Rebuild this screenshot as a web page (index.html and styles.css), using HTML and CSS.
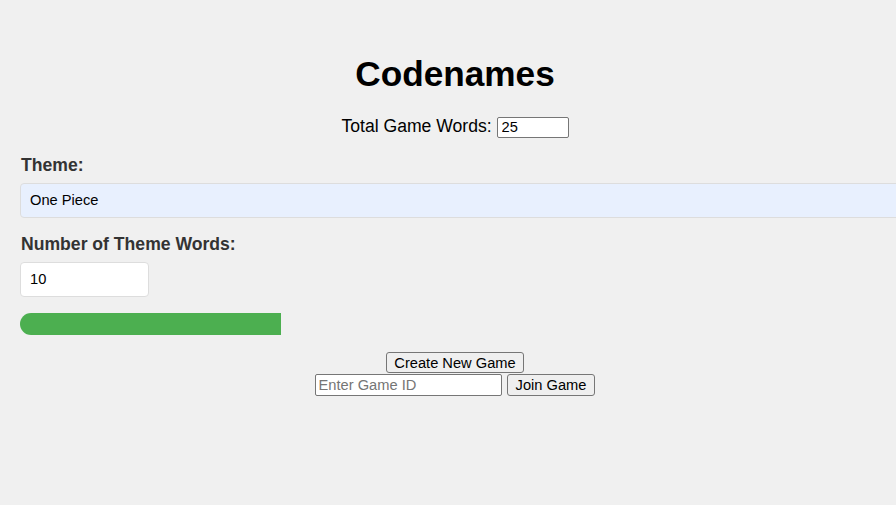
FILE: index.html
```html
<!DOCTYPE html>
<html lang="en">
<head>
<meta charset="utf-8">
<title>Codenames</title>
<link rel="stylesheet" href="styles.css">
</head>
<body>
<main class="app">
  <h1 class="title">Codenames</h1>
  <div class="total-row">
    <label for="total">Total Game Words:</label> <input id="total" class="total-input" type="text" value="25">
  </div>
  <section class="theme-section">
    <label class="field-label" for="theme">Theme:</label>
    <input id="theme" class="theme-input" type="text" value="One Piece">
    <label class="field-label" for="count">Number of Theme Words:</label>
    <input id="count" class="count-input" type="text" value="10">
    <div class="progress"><div class="progress-fill" style="width: 30%"></div></div>
  </section>
  <div class="action-row create-row">
    <button class="btn" type="button">Create New Game</button>
  </div>
  <div class="action-row join-row">
    <input class="game-id-input" type="text" placeholder="Enter Game ID">
    <button class="btn join-btn" type="button">Join Game</button>
  </div>
</main>
</body>
</html>
```
FILE: styles.css
```css
html, body {
  overflow-x: hidden;
}

body {
  margin: 0;
  background: #f0f0f0;
  font-family: "Liberation Sans", Arial, sans-serif;
  font-size: 17.6px;
  color: #000;
}

.app {
  padding: 54px 6px 0 20px;
  text-align: center;
}

.title {
  margin: 0;
  font-size: 35.2px;
  line-height: 40px;
  font-weight: bold;
}

.total-row {
  margin-top: 22px;
}

.total-input {
  width: 72px;
  height: 21px;
  box-sizing: border-box;
  padding: 1px 4px;
  border: 1px solid #767676;
  border-radius: 2px;
  background: #fff;
  font-family: "Liberation Sans", Arial, sans-serif;
  font-size: 14.67px;
  color: #000;
}

.theme-section {
  text-align: left;
  padding-top: 1px;
}

.field-label {
  display: block;
  margin: 16.5px 0 6.6px;
  padding-left: 1px;
  font-weight: bold;
  color: #333;
}

.theme-input,
.count-input {
  display: block;
  height: 35px;
  box-sizing: border-box;
  padding: 0 9px;
  border: 1px solid #ddd;
  border-radius: 4px;
  font-family: "Liberation Sans", Arial, sans-serif;
  font-size: 14.67px;
  color: #000;
}

.theme-input {
  width: calc(100% + 40px);
  background: #e8f0fe;
}

.count-input {
  width: 129px;
  background: #fff;
}

.progress {
  margin-top: 16.5px;
  height: 22px;
  border-radius: 11px;
  overflow: hidden;
}

.progress-fill {
  height: 100%;
  background: #4caf50;
}

.action-row {
  display: flex;
  justify-content: center;
  align-items: center;
  gap: 5px;
}

.create-row {
  margin-top: 17px;
}

.join-row {
  margin-top: 1px;
}

.btn {
  height: 21px;
  box-sizing: border-box;
  padding: 0 7px;
  border: 1px solid #767676;
  border-radius: 3px;
  background: #efefef;
  font-family: "Liberation Sans", Arial, sans-serif;
  font-size: 14.67px;
  color: #000;
}

.join-btn {
  height: 21.5px;
  padding: 0 8px;
}

.game-id-input {
  width: 187px;
  height: 21.5px;
  box-sizing: border-box;
  padding: 1px 3px;
  border: 1px solid #767676;
  border-radius: 2px;
  background: #fff;
  font-family: "Liberation Sans", Arial, sans-serif;
  font-size: 14.67px;
  color: #000;
}

.game-id-input::placeholder {
  color: #757575;
}
```
